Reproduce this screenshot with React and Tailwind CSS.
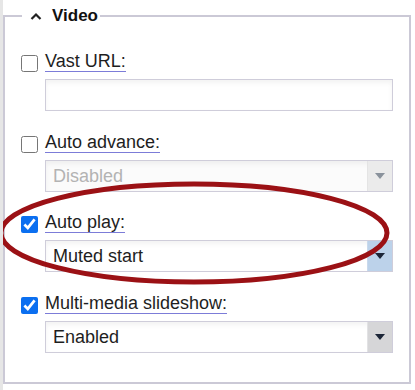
import React from 'react';

const font = { fontFamily: '"Liberation Sans", Arial, sans-serif' };

const Label = ({ children }) => (
  <span className="block text-[18px] leading-[20px] text-[#1e1e1e] border-b border-[#7c7cd8]">
    {children}
  </span>
);

const Option = ({ label, checked }) => (
  <div className="flex items-start">
    <input
      type="checkbox"
      defaultChecked={checked}
      className="m-0 mt-[4px] w-[17px] h-[17px] accent-[#0b6ff0]"
    />
    <div className="ml-[7px] flex">
      <Label>{label}</Label>
    </div>
  </div>
);

const Select = ({ value, variant }) => {
  const box =
    variant === 'disabled'
      ? 'bg-[#ebebeb] border-[#e4e4e4]'
      : variant === 'active'
      ? 'bg-[#bcd2ea] border-[#c9d9ec]'
      : 'bg-[#d6d6d8] border-[#e2e2e4]';
  const arrow = variant === 'disabled' ? '#8a929c' : '#1c2638';
  return (
    <div
      className={`ml-[24px] mt-[7px] flex h-[32px] w-[348px] border border-[#cfcdda] ${
        variant === 'disabled' ? 'bg-[#fbfbfb]' : 'bg-white'
      } shadow-[inset_0_3px_5px_rgba(0,0,0,0.05)]`}
    >
      <div
        className={`flex-1 flex items-center pl-[7px] text-[18px] leading-[20px] ${
          variant === 'disabled' ? 'text-[#b3b3b3]' : 'text-[#1e1e1e]'
        }`}
      >
        {value}
      </div>
      <div className={`w-[25px] flex items-center justify-center border-l ${box}`}>
        <svg width="10" height="6" viewBox="0 0 10 6">
          <polygon points="0,0 10,0 5,6" fill={arrow} />
        </svg>
      </div>
    </div>
  );
};

export default function App() {
  return (
    <div
      className="relative h-[390px] w-[415px] overflow-hidden bg-white border-l-[3px] border-[#e6e6e6] pt-[5px]"
      style={font}
    >
      <fieldset className="w-[408px] border-2 border-[#cbc9d6] pb-[29px] pl-[16px]">
        <legend className="ml-[1px] pl-[8px] pr-[2px] flex items-center h-[22px]">
          <svg width="12" height="8" viewBox="0 0 12 8" className="mr-[10px]">
            <polyline points="1.5,7 6,2.5 10.5,7" fill="none" stroke="#222" strokeWidth="2.2" />
          </svg>
          <span className="text-[17px] font-bold text-[#111] leading-[22px]">Video</span>
        </legend>

        <div className="pt-[24px]">
          <Option label="Vast URL:" />
          <div className="ml-[24px] mt-[7px] h-[32px] w-[348px] border border-[#cfcdda] bg-white shadow-[inset_0_3px_5px_rgba(0,0,0,0.05)]" />

          <div className="mt-[21px]">
            <Option label="Auto advance:" />
            <Select value="Disabled" variant="disabled" />
          </div>

          <div className="mt-[20px]">
            <Option label="Auto play:" checked />
            <Select value="Muted start" variant="active" />
          </div>

          <div className="mt-[21px]">
            <Option label="Multi-media slideshow:" checked />
            <Select value="Enabled" variant="plain" />
          </div>
        </div>
      </fieldset>

      <svg className="absolute inset-0 pointer-events-none" width="415" height="390">
        <ellipse cx="191" cy="233" rx="193" ry="49" fill="none" stroke="#9b1115" strokeWidth="5" />
      </svg>
    </div>
  );
}
